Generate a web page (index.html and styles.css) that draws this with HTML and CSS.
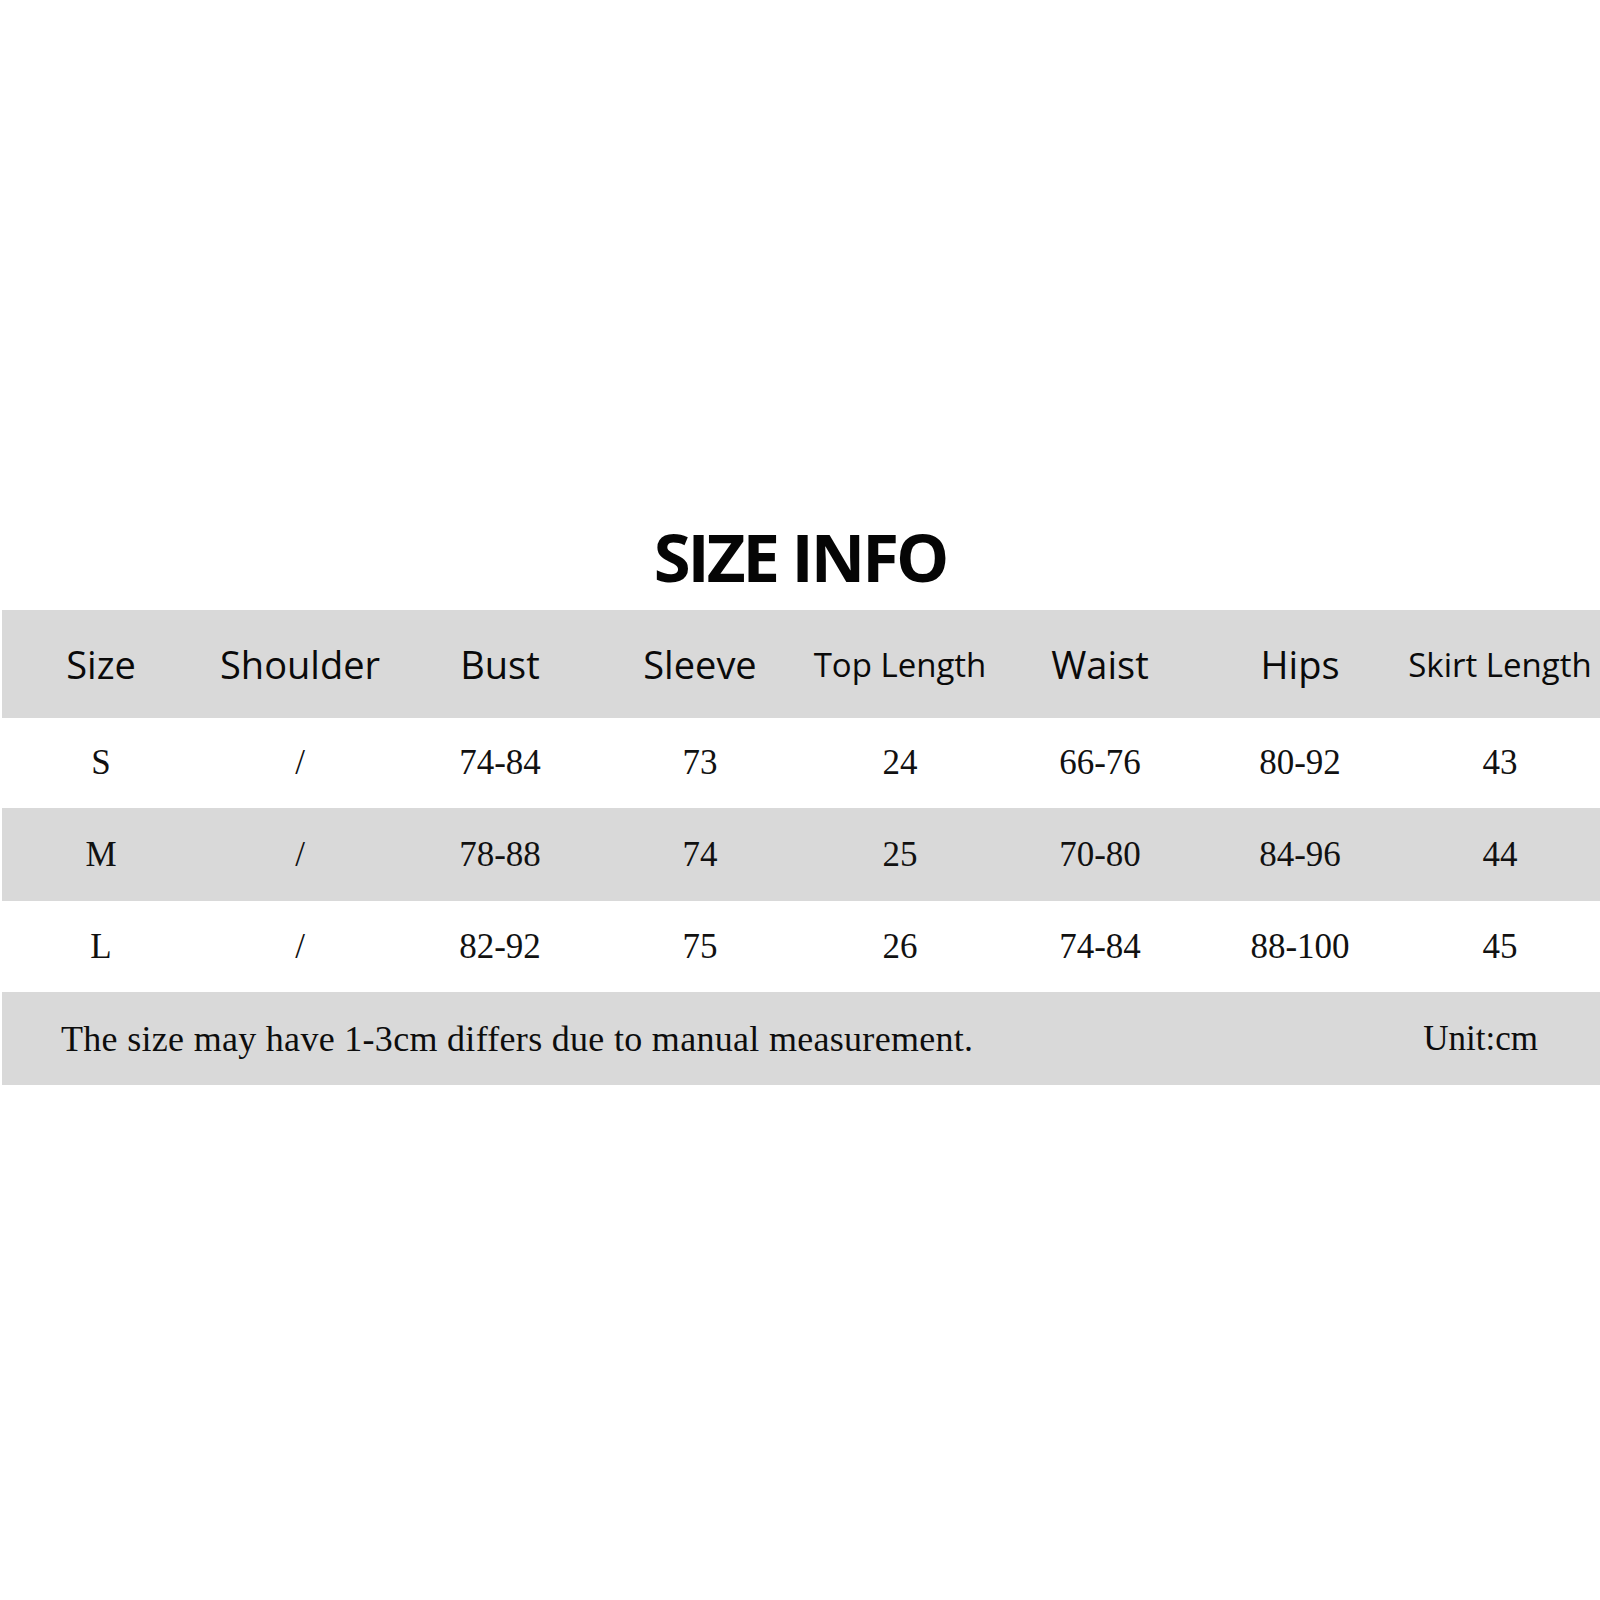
FILE: index.html
```html
<!DOCTYPE html>
<html lang="en">
<head>
<meta charset="utf-8">
<title>Size Info</title>
<link rel="stylesheet" href="styles.css">
</head>
<body>
<main class="page">
  <h1 class="title">SIZE INFO</h1>
  <section class="chart">
    <div class="row head">
      <div class="cell">Size</div>
      <div class="cell">Shoulder</div>
      <div class="cell">Bust</div>
      <div class="cell">Sleeve</div>
      <div class="cell small">Top Length</div>
      <div class="cell">Waist</div>
      <div class="cell">Hips</div>
      <div class="cell small">Skirt Length</div>
    </div>
    <div class="row data">
      <div class="cell">S</div>
      <div class="cell">/</div>
      <div class="cell">74-84</div>
      <div class="cell">73</div>
      <div class="cell">24</div>
      <div class="cell">66-76</div>
      <div class="cell">80-92</div>
      <div class="cell">43</div>
    </div>
    <div class="row data shade">
      <div class="cell">M</div>
      <div class="cell">/</div>
      <div class="cell">78-88</div>
      <div class="cell">74</div>
      <div class="cell">25</div>
      <div class="cell">70-80</div>
      <div class="cell">84-96</div>
      <div class="cell">44</div>
    </div>
    <div class="row data">
      <div class="cell">L</div>
      <div class="cell">/</div>
      <div class="cell">82-92</div>
      <div class="cell">75</div>
      <div class="cell">26</div>
      <div class="cell">74-84</div>
      <div class="cell">88-100</div>
      <div class="cell">45</div>
    </div>
    <div class="foot">
      <span class="note">The size may have 1-3cm differs due to manual measurement.</span>
      <span class="unit">Unit:cm</span>
    </div>
  </section>
</main>
</body>
</html>
```

FILE: styles.css
```css
html, body {
  margin: 0;
  padding: 0;
  background: #ffffff;
  overflow: hidden;
}

.page {
  width: 1600px;
  height: 1600px;
  padding-top: 523px;
  box-sizing: border-box;
}

.title {
  margin: 0 0 20px 0;
  font-family: "Open Sans", "Noto Sans", sans-serif;
  font-weight: 700;
  font-size: 67px;
  line-height: 67px;
  letter-spacing: -3px;
  text-align: center;
  color: #050505;
}

.chart {
  margin-left: 2px;
  width: 1598px;
  display: flex;
  flex-direction: column;
}

.row {
  display: grid;
  grid-template-columns: 198px repeat(7, 200px);
  align-items: center;
}

.cell {
  text-align: center;
  white-space: nowrap;
}

.head {
  height: 108px;
  background: #d9d9d9;
  font-family: "Open Sans", "Noto Sans", sans-serif;
  font-size: 38px;
  color: #0a0a0a;
}

.head .small {
  font-size: 33px;
}

.data {
  height: 91px;
  font-family: "Liberation Serif", "Times New Roman", serif;
  font-size: 35px;
  color: #111111;
}

.data:nth-child(2) { height: 90px; }
.data:nth-child(3) { height: 93px; }

.shade {
  background: #d9d9d9;
}

.foot {
  height: 93px;
  background: #d9d9d9;
  display: flex;
  align-items: center;
  justify-content: space-between;
  padding: 0 62px 0 59px;
  font-family: "Liberation Serif", "Times New Roman", serif;
  color: #0d0d0d;
}

.note {
  font-size: 36px;
  letter-spacing: 0.3px;
}

.unit {
  font-size: 35px;
}
```
